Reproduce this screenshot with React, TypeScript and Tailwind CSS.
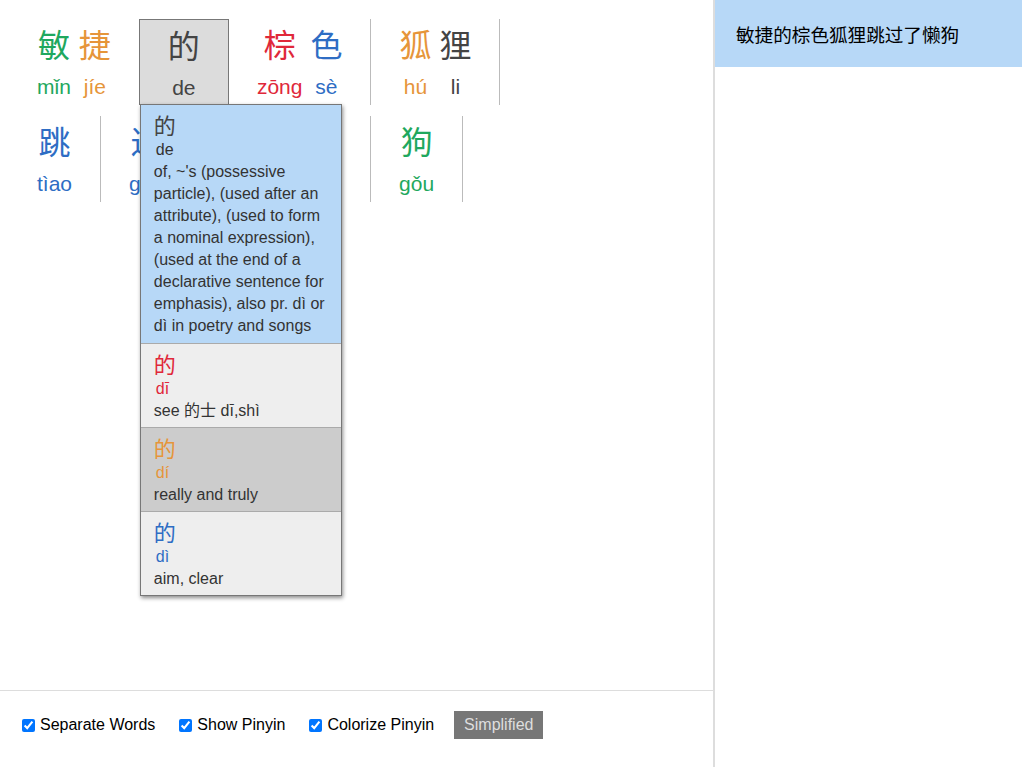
import React from 'react';

type Syl = { h: string; p: string; t: number };
type Word = { syls: Syl[]; selected?: boolean };

const toneColors: Record<number, string> = {
  1: 'text-[#e0283a]',
  2: 'text-[#e6953a]',
  3: 'text-[#1fa85e]',
  4: 'text-[#2e6dc4]',
  5: 'text-[#444444]',
};

const words: Word[] = [
  { syls: [{ h: '敏', p: 'mǐn', t: 3 }, { h: '捷', p: 'jíe', t: 2 }] },
  { syls: [{ h: '的', p: 'de', t: 5 }], selected: true },
  { syls: [{ h: '棕', p: 'zōng', t: 1 }, { h: '色', p: 'sè', t: 4 }] },
  { syls: [{ h: '狐', p: 'hú', t: 2 }, { h: '狸', p: 'li', t: 5 }] },
  { syls: [{ h: '跳', p: 'tìao', t: 4 }] },
  { syls: [{ h: '过', p: 'guò', t: 4 }] },
  { syls: [{ h: '了', p: 'le', t: 5 }] },
  { syls: [{ h: '懒', p: 'lǎn', t: 3 }] },
  { syls: [{ h: '狗', p: 'gǒu', t: 3 }] },
];

const entries = [
  {
    pinyin: 'de',
    tone: 5,
    def: "of, ~'s (possessive particle), (used after an attribute), (used to form a nominal expression), (used at the end of a declarative sentence for emphasis), also pr. dì or dì in poetry and songs",
    bg: 'bg-[#b7d8f7]',
  },
  { pinyin: 'dī', tone: 1, def: 'see 的士 dī,shì', bg: 'bg-[#eeeeee]' },
  { pinyin: 'dí', tone: 2, def: 'really and truly', bg: 'bg-[#cccccc]' },
  { pinyin: 'dì', tone: 4, def: 'aim, clear', bg: 'bg-[#eeeeee]' },
];

function Popup() {
  return (
    <div className="absolute top-full left-0 z-10 w-[202px] border border-[#777] bg-white shadow-[1px_2px_4px_rgba(0,0,0,0.45)]">
      {entries.map((e, i) => (
        <div
          key={i}
          className={`${e.bg} px-[13px] pt-[4px] ${i > 0 ? 'border-t border-[#aaa] pb-[5px]' : 'pb-[6px]'}`}
        >
          <div className={`text-[22px] leading-[30px] ${toneColors[e.tone]} [font-family:'Noto_Sans_CJK_SC',sans-serif]`}>的</div>
          <div className={`pl-[2px] text-[16px] leading-[22px] ${e.tone === 5 ? 'text-[#333]' : toneColors[e.tone]}`}>{e.pinyin}</div>
          <div className="text-[16px] leading-[22px] text-[#333] [font-family:'Liberation_Sans','Noto_Sans_CJK_SC',sans-serif]">{e.def}</div>
        </div>
      ))}
    </div>
  );
}

function WordBlock({ word }: { word: Word }) {
  return (
    <div
      className={`relative flex h-[86px] px-6 pt-[4px] ${
        word.selected ? '-ml-px border border-[#777] bg-[#dcdcdc]' : 'border-r border-[#bbb]'
      }`}
    >
      {word.syls.map((s, i) => (
        <div key={i} className="flex flex-col items-center px-1">
          <span className={`text-[32px] leading-[40px] [font-family:'Noto_Sans_CJK_SC',sans-serif] ${toneColors[s.t]}`}>{s.h}</span>
          <span className={`mt-[10px] text-[21px] leading-[28px] ${toneColors[s.t]}`}>{s.p}</span>
        </div>
      ))}
      {word.selected && <Popup />}
    </div>
  );
}

export default function App() {
  return (
    <div className="flex h-[767px] w-full bg-white [font-family:'Liberation_Sans',Arial,sans-serif] text-black">
      {/* reader */}
      <div className="flex flex-1 flex-col">
        <div className="flex-1 pl-[9px] pt-[19px]">
          <div className="flex w-[560px] flex-wrap gap-y-[11px]">
            {words.map((w, i) => (
              <WordBlock key={i} word={w} />
            ))}
          </div>
        </div>

        {/* options */}
        <div className="flex h-[77px] items-start border-t border-[#ddd] pl-[22px] pt-5">
          <div className="flex h-[28px] items-center text-[16px]">
            <input type="checkbox" defaultChecked className="h-[13px] w-[13px]" />
            <span className="ml-[5px]">Separate Words</span>
            <input type="checkbox" defaultChecked className="ml-6 h-[13px] w-[13px]" />
            <span className="ml-[5px]">Show Pinyin</span>
            <input type="checkbox" defaultChecked className="ml-6 h-[13px] w-[13px]" />
            <span className="ml-[5px]">Colorize Pinyin</span>
            <button className="ml-5 h-[28px] bg-[#777] px-[10px] text-[16px] text-[#dedede]">Simplified</button>
          </div>
        </div>
      </div>

      {/* sentence list */}
      <div className="w-[309px] border-l-2 border-[#ddd]">
        <div className="flex h-[67px] items-center bg-[#b7d8f7] px-[21px] text-[18.6px] [font-family:'Noto_Sans_CJK_SC',sans-serif]">
          敏捷的棕色狐狸跳过了懒狗
        </div>
      </div>
    </div>
  );
}
